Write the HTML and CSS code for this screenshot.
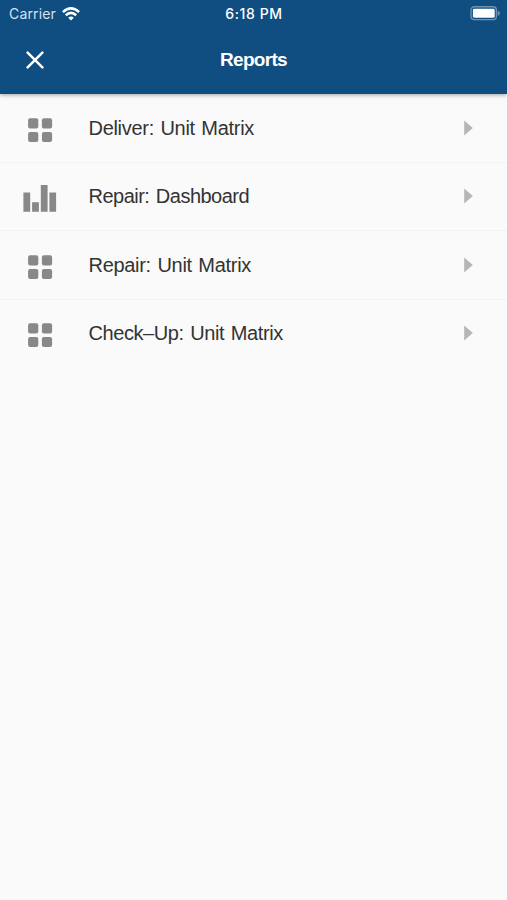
FILE: index.html
```html
<!DOCTYPE html>
<html lang="en">
<head>
<meta charset="utf-8">
<title>Reports</title>
<link rel="stylesheet" href="styles.css">
</head>
<body>
<header class="header">
  <div class="status">
    <div class="carrier"><span class="carrier-name">Carrier</span>
      <svg class="wifi" width="18" height="14" viewBox="0 0 18 14" fill="none" stroke="#fff" stroke-width="2.5"><path d="M.9 5.1Q9-2.3 17.1 5.1"/><path d="M3.8 8.2Q9 3.5 14.2 8.2"/><path d="M6.2 10.7Q9 8.1 11.8 10.7L9 13.6Z" fill="#fff" stroke="none"/></svg>
    </div>
    <span class="time">6:18 PM</span>
    <svg class="battery" width="31" height="15" viewBox="0 0 31 15"><rect x="1" y=".8" width="25.4" height="12.8" rx="3.3" fill="none" stroke="#7093b3" stroke-width="1.4"/><rect x="2.9" y="2.7" width="21.8" height="9" rx="1.4" fill="#fff"/><path d="M27.7 4.5Q30 5.5 30 7.2T27.7 9.9Z" fill="#7093b3"/></svg>
  </div>
  <div class="navbar">
    <svg class="close" width="18" height="18" viewBox="0 0 18 18" fill="none" stroke="#fff" stroke-width="2.5" stroke-linecap="round"><path d="M1.6 1.6 16.4 16.4M16.4 1.6 1.6 16.4"/></svg>
    <h1 class="title">Reports</h1>
  </div>
</header>
<svg class="defs" width="0" height="0">
  <symbol id="matrix" viewBox="0 0 34 28"><g fill="#888"><rect x="5.1" y="2.2" width="10.2" height="10.2" rx="2"/><rect x="18.9" y="2.2" width="10.2" height="10.2" rx="2"/><rect x="5.1" y="15.9" width="10.2" height="10.2" rx="2"/><rect x="18.9" y="15.9" width="10.2" height="10.2" rx="2"/></g></symbol>
  <symbol id="bars" viewBox="0 0 34 28"><path fill="#888" d="M.4 7.4h6.8v19.4H.4zM9.1 17.2h6.8v9.6H9.1zM17.8 0h6.8v26.8h-6.8zM26.4 7.4h6.7v19.4h-6.7z"/></symbol>
  <symbol id="arrow" viewBox="0 0 9 16"><path fill="#b6b6b6" d="M.2.4 8.8 8 .2 15.6z"/></symbol>
</svg>
<main class="list">
  <div class="row"><svg class="icon"><use href="#matrix"/></svg><span class="label">Deliver: Unit Matrix</span><svg class="arrow"><use href="#arrow"/></svg></div>
  <div class="row"><svg class="icon"><use href="#bars"/></svg><span class="label label-tight">Repair: Dashboard</span><svg class="arrow"><use href="#arrow"/></svg></div>
  <div class="row"><svg class="icon"><use href="#matrix"/></svg><span class="label">Repair: Unit Matrix</span><svg class="arrow"><use href="#arrow"/></svg></div>
  <div class="row"><svg class="icon"><use href="#matrix"/></svg><span class="label label-long">Check–Up: Unit Matrix</span><svg class="arrow"><use href="#arrow"/></svg></div>
</main>
</body>
</html>
```
FILE: styles.css
```css
* { box-sizing: border-box; }
body {
  margin: 0;
  min-height: 900px;
  background: #fafafa;
  font-family: "Liberation Sans", Arial, sans-serif;
}
.header {
  height: 94px;
  background: #104e81;
  color: #fff;
  box-shadow: 0 1px 4px rgba(0, 0, 0, .35);
}
.status {
  display: grid;
  grid-template-columns: 1fr auto 1fr;
  align-items: center;
  height: 27px;
  padding: 0 6px 0 9px;
  font-family: Inter, sans-serif;
}
.carrier { display: flex; align-items: center; gap: 6px; }
.carrier-name { color: #d5e2ee; font-size: 14px; letter-spacing: .15px; }
.time { font-size: 14px; font-weight: 500; letter-spacing: .6px; margin-right: 2px; }
.battery { justify-self: end; }
.navbar {
  display: grid;
  grid-template-columns: 60px 1fr 60px;
  align-items: center;
  height: 65px;
}
.close { margin-left: 26px; }
.title {
  margin: 0;
  font-size: 19px;
  font-weight: 700;
  letter-spacing: -.7px;
  text-align: center;
}
.defs { display: block; }
.row {
  display: flex;
  align-items: center;
  height: 68.5px;
  padding: 0 34px 0 23px;
  border-bottom: 1px solid #f2f2f2;
}
.row:last-child { border-bottom: 0; height: 66.8px; }
.icon { width: 34px; height: 28px; margin-top: 5px; }
.label {
  flex: 1;
  margin-left: 31.5px;
  color: #333;
  font-size: 20px;
  line-height: 24px;
  letter-spacing: -.3px;
  word-spacing: 1.3px;
}
.label-tight { letter-spacing: -.52px; word-spacing: 1.5px; }
.label-long { letter-spacing: -.42px; word-spacing: 1.5px; }
.arrow { width: 9px; height: 16px; }
```
